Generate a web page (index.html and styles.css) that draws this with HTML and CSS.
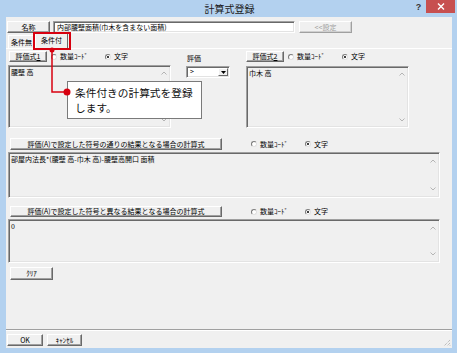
FILE: index.html
```html
<!DOCTYPE html>
<html>
<head>
  <title>計算式登録</title>
  <meta charset="UTF-8">
  <link rel="stylesheet" href="styles.css">
</head>
<body>
  <div class="window">
    <div class="titlebar">
      <div></div>
      <div class="title">計算式登録</div>
      <div class="controls">
        <span class="help">?</span>
        <span class="close">
          <svg width="8" height="7" viewBox="0 0 8 7"><path d="M1 0.5 L7 6.5 M7 0.5 L1 6.5" stroke="#fff" stroke-width="1.4"/></svg>
        </span>
      </div>
    </div>

    <div class="client">
      <div class="name-row">
        <button class="btn btn-name">名称</button>
        <div class="field name-field">内部腰壁面積(巾木を含まない面積)</div>
        <button class="btn btn-set" disabled>&lt;&lt;設定</button>
      </div>

      <div class="tabs">
        <div class="tab tab-off">条件無</div>
        <div class="tab active">条件付</div>
      </div>

      <div class="panel">
        <div class="eval-col">
          <div class="head">
            <button class="btn btn-eval first">評価式<u>1</u></button>
            <label class="radio"><span class="dot"></span>数量ｺｰﾄﾞ</label>
            <label class="radio"><span class="dot on"></span>文字</label>
          </div>
          <div class="memo memo-small">
            <div class="memo-text">腰壁 高</div>
            <div class="scroll">
              <svg width="6" height="4" viewBox="0 0 6 4"><path d="M0.5 3.5 L3 1 L5.5 3.5" fill="none" stroke="#b4b4b4"/></svg>
              <svg width="6" height="4" viewBox="0 0 6 4"><path d="M0.5 0.5 L3 3 L5.5 0.5" fill="none" stroke="#b4b4b4"/></svg>
            </div>
          </div>
        </div>

        <div class="cond-col">
          <div class="cond-label">評価</div>
          <div class="select">
            <span class="select-value">&gt;</span>
            <span class="select-btn">
              <svg width="5" height="3" viewBox="0 0 5 3"><path d="M0 0 H5 L2.5 3 Z" fill="#000"/></svg>
            </span>
          </div>
        </div>

        <div class="eval-col right">
          <div class="head">
            <button class="btn btn-eval">評価式<u>2</u></button>
            <label class="radio"><span class="dot"></span>数量ｺｰﾄﾞ</label>
            <label class="radio"><span class="dot on"></span>文字</label>
          </div>
          <div class="memo memo-small">
            <div class="memo-text">巾木 高</div>
            <div class="scroll">
              <svg width="6" height="4" viewBox="0 0 6 4"><path d="M0.5 3.5 L3 1 L5.5 3.5" fill="none" stroke="#b4b4b4"/></svg>
              <svg width="6" height="4" viewBox="0 0 6 4"><path d="M0.5 0.5 L3 3 L5.5 0.5" fill="none" stroke="#b4b4b4"/></svg>
            </div>
          </div>
        </div>
      </div>

      <div class="formula">
        <div class="formula-head">
          <button class="btn btn-formula">評価(A)で設定した符号の通りの結果となる場合の計算式</button>
          <label class="radio first"><span class="dot"></span>数量ｺｰﾄﾞ</label>
          <label class="radio"><span class="dot on"></span>文字</label>
        </div>
        <div class="memo memo-wide">
          <div class="memo-text">部屋内法長*(腰壁 高-巾木 高)-腰壁高開口 面積</div>
          <div class="scroll">
            <svg width="6" height="4" viewBox="0 0 6 4"><path d="M0.5 3.5 L3 1 L5.5 3.5" fill="none" stroke="#b4b4b4"/></svg>
            <svg width="6" height="4" viewBox="0 0 6 4"><path d="M0.5 0.5 L3 3 L5.5 0.5" fill="none" stroke="#b4b4b4"/></svg>
          </div>
        </div>
      </div>

      <div class="formula second">
        <div class="formula-head">
          <button class="btn btn-formula">評価(A)で設定した符号と異なる結果となる場合の計算式</button>
          <label class="radio first"><span class="dot"></span>数量ｺｰﾄﾞ</label>
          <label class="radio"><span class="dot on"></span>文字</label>
        </div>
        <div class="memo memo-wide">
          <div class="memo-text">0</div>
          <div class="scroll">
            <svg width="6" height="4" viewBox="0 0 6 4"><path d="M0.5 3.5 L3 1 L5.5 3.5" fill="none" stroke="#b4b4b4"/></svg>
            <svg width="6" height="4" viewBox="0 0 6 4"><path d="M0.5 0.5 L3 3 L5.5 0.5" fill="none" stroke="#b4b4b4"/></svg>
          </div>
        </div>
      </div>

      <button class="btn btn-clear">ｸﾘｱ</button>

      <div class="spacer"></div>
      <div class="separator"></div>

      <div class="footer">
        <button class="btn btn-ok">OK</button>
        <button class="btn btn-cancel">ｷｬﾝｾﾙ</button>
        <svg class="grip" width="8" height="8" viewBox="0 0 8 8">
          <path d="M7 1 L1 7 M7 4 L4 7 M7 6.5 L6.5 7" stroke="#a8a8a8" stroke-width="1" stroke-dasharray="1 1"/>
        </svg>
      </div>

      <!-- callout over the dialog -->
      <div class="marker"></div>
      <div class="callout">条件付きの計算式を登録<br>します。</div>
      <svg class="leader" width="446" height="331" viewBox="0 0 446 331">
        <polyline points="46,33 46,75 61,75" fill="none" stroke="#d7000f" stroke-width="1.5"/>
        <circle cx="46" cy="33" r="2.5" fill="#d7000f"/>
        <circle cx="61" cy="75" r="3.5" fill="#d7000f"/>
      </svg>
    </div>
  </div>
</body>
</html>
```

FILE: styles.css
```css
body {
  margin: 0;
  font-family: "Noto Sans CJK JP", sans-serif;
}
.window {
  width: 457px;
  height: 353px;
  background-color: #b3d1ef;
  display: flex;
  flex-direction: column;
}
.titlebar {
  height: 17px;
  display: grid;
  grid-template-columns: 1fr auto 1fr;
  align-items: start;
}
.title {
  font-size: 10px;
  line-height: 18px;
  color: #1a1a1a;
  padding-left: 2px;
}
.controls {
  justify-self: end;
  display: flex;
  margin-right: 2px;
}
.help {
  width: 11px;
  margin-right: 2px;
  font-family: "Liberation Sans", sans-serif;
  font-size: 9px;
  font-weight: bold;
  line-height: 14px;
  text-align: center;
  color: #333;
}
.close {
  width: 29px;
  height: 13px;
  background-color: #c75050;
  display: flex;
  align-items: center;
  justify-content: center;
}
.client {
  flex: 1;
  margin: 0 5px 5px 6px;
  background-color: #f0f0f0;
  position: relative;
  display: flex;
  flex-direction: column;
  font-size: 7px;
  line-height: 1;
  color: #000;
}
.btn {
  font: inherit;
  line-height: 8px;
  color: #000;
  background-color: #f0f0f0;
  border: 1px solid;
  border-color: #fff #696969 #696969 #fff;
  box-shadow: inset -1px -1px 0 #a0a0a0;
  padding: 0 0 1px 0;
  box-sizing: border-box;
  display: flex;
  align-items: center;
  justify-content: center;
  white-space: nowrap;
}
.btn[disabled] {
  color: #a0a0a0;
  border-color: #fff #a0a0a0 #a0a0a0 #fff;
  box-shadow: inset -1px -1px 0 #d0d0d0;
}
.field, .memo, .select {
  box-sizing: border-box;
  border: 1px solid;
  border-color: #a0a0a0 #fff #fff #a0a0a0;
  box-shadow: inset 1px 1px 0 #696969, inset -1px -1px 0 #e3e3e3;
}
.name-row {
  display: flex;
  height: 12px;
  margin: 4px 0 0 1px;
}
.btn-name {
  width: 43px;
}
.name-field {
  width: 242px;
  margin-left: 3px;
  background-color: #fff;
  padding: 2px 0 0 3px;
  white-space: nowrap;
}
.btn-set {
  width: 53px;
  margin-left: 4px;
}
.tabs {
  display: flex;
  align-items: flex-end;
  height: 15px;
  padding-left: 2px;
}
.tab {
  height: 13px;
  box-sizing: border-box;
  border: 1px solid;
  border-color: #fff #696969 transparent #fff;
  border-bottom: 0;
  line-height: 12px;
  text-align: center;
}
.tab-off {
  width: 27px;
}
.tab.active {
  width: 33px;
  height: 15px;
  line-height: 13px;
}
.panel {
  border-top: 1px solid #fff;
  display: flex;
  padding-left: 2px;
}
.eval-col {
  width: 163px;
  display: flex;
  flex-direction: column;
}
.head {
  display: flex;
  align-items: center;
  height: 11px;
  margin-top: 2px;
}
.btn-eval {
  width: 38px;
  height: 11px;
  margin-right: 4px;
}
.btn-eval u {
  text-underline-offset: 1px;
}
.btn-eval.first {
  margin-left: 1px;
}
.radio {
  display: flex;
  align-items: center;
  gap: 3px;
  width: 54px;
  white-space: nowrap;
}
.dot {
  width: 6px;
  height: 6px;
  box-sizing: border-box;
  border-radius: 50%;
  border: 1px solid;
  border-color: #7a7a7a #e0e0e0 #e0e0e0 #7a7a7a;
  background-color: #fff;
  display: flex;
  align-items: center;
  justify-content: center;
}
.dot.on:after {
  content: "";
  width: 2px;
  height: 2px;
  border-radius: 50%;
  background-color: #000;
}
.memo {
  display: flex;
  background-color: #f0f0f0;
}
.memo-small {
  height: 63px;
  margin-top: 3px;
}
.right .memo-small {
  height: 62px;
  margin-top: 4px;
}
.memo-text {
  flex: 1;
  padding: 3px 0 0 2px;
  white-space: nowrap;
}
.scroll {
  width: 12px;
  display: flex;
  flex-direction: column;
  justify-content: space-between;
  align-items: center;
  padding: 5px 0;
}
.cond-col {
  width: 44px;
  margin: 0 16px 0 15px;
}
.cond-label {
  margin-top: 6px;
  height: 8px;
  padding-left: 1px;
}
.select {
  margin-top: 3px;
  height: 12px;
  display: flex;
  background-color: #fff;
}
.select-value {
  flex: 1;
  padding: 1px 0 0 3px;
}
.select-btn {
  width: 10px;
  margin: 1px;
  box-sizing: border-box;
  border: 1px solid;
  border-color: #fff #696969 #696969 #fff;
  background-color: #f0f0f0;
  display: flex;
  align-items: center;
  justify-content: center;
}
.formula {
  margin-top: 10px;
}
.formula.second {
  margin-top: 8px;
}
.formula-head {
  display: flex;
  align-items: center;
  height: 12px;
}
.second .formula-head {
  height: 11px;
}
.btn-formula {
  width: 212px;
  height: 100%;
  margin-left: 4px;
}
.radio.first {
  margin-left: 29px;
}
.memo-wide {
  width: 432px;
  height: 46px;
  margin: 2px 0 0 2px;
}
.second .memo-wide {
  height: 44px;
}
.memo-wide .scroll {
  padding: 6px 0;
}
.btn-clear {
  width: 43px;
  height: 13px;
  margin: 4px 0 0 4px;
}
.spacer {
  flex: 1;
}
.separator {
  border-top: 1px solid #a0a0a0;
  border-bottom: 1px solid #fff;
}
.footer {
  display: flex;
  height: 12px;
  margin: 3px 0 2px 0;
}
.btn-ok {
  width: 36px;
  margin-left: 1px;
}
.btn-cancel {
  width: 35px;
  margin-left: 4px;
}
.grip {
  margin: auto 1px -1px auto;
}
.marker {
  position: absolute;
  left: 27px;
  top: 15px;
  width: 38px;
  height: 18px;
  box-sizing: border-box;
  border: 2px solid #d7000f;
}
.callout {
  position: absolute;
  left: 61px;
  top: 64px;
  width: 135px;
  height: 38px;
  box-sizing: border-box;
  border: 1px solid #7a7a7a;
  background-color: #fff;
  font-size: 10.7px;
  line-height: 15px;
  padding: 3px 0 0 7px;
  color: #111;
}
.leader {
  position: absolute;
  left: 0;
  top: 0;
  pointer-events: none;
}
```
